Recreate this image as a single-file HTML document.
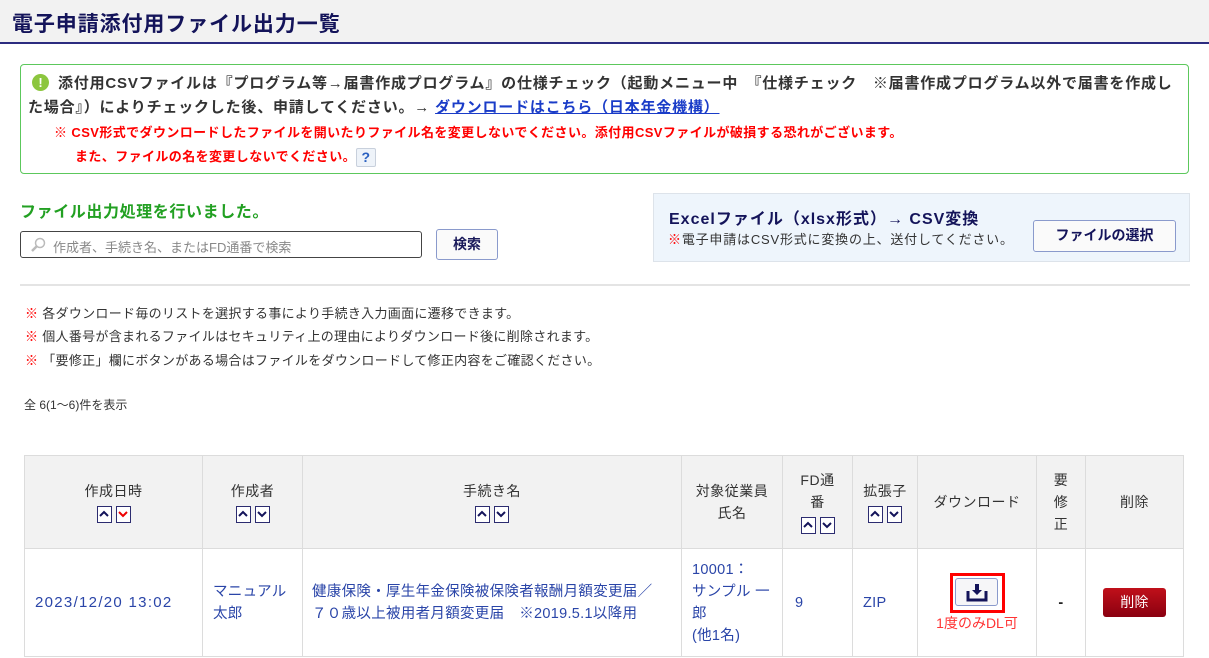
<!DOCTYPE html>
<html><head><meta charset="utf-8"><style>
*{margin:0;padding:0;box-sizing:border-box}
body{width:1209px;height:658px;overflow:hidden;background:#fff;font-family:"Liberation Sans","Noto Sans CJK JP",sans-serif;color:#333;position:relative}
.a{position:absolute;white-space:nowrap}
.hdr{left:0;top:0;width:1209px;height:44px;background:#f2f2f2;border-bottom:2px solid #2c2c80}
.title{left:12px;top:8px;font-size:21px;letter-spacing:0.9px;font-weight:bold;color:#14145a}
.gbox{left:20px;top:64px;width:1169px;height:110px;border:1px solid #5cc85c;border-radius:4px}
.l1{font-size:15px;font-weight:bold;color:#333;letter-spacing:0.8px}
.red{color:#f00;font-size:13px;font-weight:bold;letter-spacing:0.4px}
.excl{display:inline-block;width:17px;height:17px;border-radius:50%;background:#8cc63e;color:#fff;text-align:center;font-size:13px;line-height:17px;vertical-align:1px;margin-right:9px;letter-spacing:0}
a{color:#1a3cc8;text-decoration:underline}
.q{display:inline-block;width:20px;height:19px;border:1px solid #c8d0dc;background:#eef3f9;color:#2a60c0;font-size:14px;line-height:17px;text-align:center;border-radius:2px;vertical-align:middle}
.sort{display:inline-block;width:15px;height:17px;border:1.5px solid #2c2c70;background:#fff;margin:0 2px;vertical-align:middle;position:relative}
.sort svg{position:absolute;left:1px;top:2px}
.note{font-size:13px;letter-spacing:0.3px}
table{position:absolute;left:24px;top:455px;border-collapse:collapse;width:1160px;font-size:14px}
th,td{border:1px solid #dcdcdc;text-align:center;vertical-align:middle}
th{background:#f2f2f2;font-weight:normal;color:#333;height:93px;line-height:22px;letter-spacing:0.5px}
td{height:108px;color:#2a45a8;line-height:22px;letter-spacing:0.3px;font-size:14.5px}
</style></head><body>
<div class="a hdr"></div>
<div class="a title">電子申請添付用ファイル出力一覧</div>
<div class="a gbox"></div>
<div class="a l1" style="left:32px;top:72px"><span class="excl">!</span>添付用CSVファイルは『プログラム等→届書作成プログラム』の仕様チェック（起動メニュー中　『仕様チェック　※届書作成プログラム以外で届書を作成し</div>
<div class="a l1" style="left:28px;top:96px">た場合』）によりチェックした後、申請してください。→ <a>ダウンロードはこちら（日本年金機構）</a></div>
<div class="a red" style="left:54px;top:122px">※ CSV形式でダウンロードしたファイルを開いたりファイル名を変更しないでください。添付用CSVファイルが破損する恐れがございます。</div>
<div class="a red" style="left:75px;top:146px">また、ファイルの名を変更しないでください。<span class="q">?</span></div>

<div class="a" style="left:20px;top:198px;font-size:16px;font-weight:bold;color:#22a022;letter-spacing:0.6px">ファイル出力処理を行いました。</div>
<div class="a" style="left:20px;top:231px;width:402px;height:27px;border:1px solid #444;border-radius:3px;font-size:13px;color:#888;padding:5px 0 0 32px">作成者、手続き名、またはFD通番で検索
<svg style="position:absolute;left:9px;top:5px" width="16" height="16" viewBox="0 0 16 16"><circle cx="10" cy="6" r="4.5" fill="none" stroke="#bbb" stroke-width="1.5"/><line x1="7" y1="9" x2="2" y2="14" stroke="#bbb" stroke-width="2.5"/></svg></div>
<div class="a" style="left:436px;top:229px;width:62px;height:31px;border:1.5px solid #8a9acc;border-radius:3px;background:#fafafa;text-align:center;line-height:28px;font-size:14px;font-weight:bold;color:#1a1a5a">検索</div>

<div class="a" style="left:653px;top:193px;width:537px;height:69px;background:#eef5fc;border:1px solid #dde3ea"></div>
<div class="a" style="left:669px;top:205px;font-size:16px;font-weight:bold;color:#14145a;letter-spacing:1px">Excelファイル（xlsx形式）→ CSV変換</div>
<div class="a" style="left:668px;top:229px;font-size:13px;color:#333;letter-spacing:0.8px"><span style="color:#f00;font-weight:bold">※</span>電子申請はCSV形式に変換の上、送付してください。</div>
<div class="a" style="left:1033px;top:220px;width:143px;height:32px;border:1.5px solid #8a9acc;border-radius:3px;background:#fafafa;text-align:center;line-height:29px;font-size:14px;font-weight:bold;color:#14145a">ファイルの選択</div>

<div class="a" style="left:20px;top:284px;width:1170px;height:2px;background:#e4e4e4"></div>
<div class="a note" style="left:25px;top:303px"><span style="color:#f00;font-weight:bold">※</span> 各ダウンロード毎のリストを選択する事により手続き入力画面に遷移できます。</div>
<div class="a note" style="left:25px;top:326px"><span style="color:#f00;font-weight:bold">※</span> 個人番号が含まれるファイルはセキュリティ上の理由によりダウンロード後に削除されます。</div>
<div class="a note" style="left:25px;top:350px"><span style="color:#f00;font-weight:bold">※</span> 「要修正」欄にボタンがある場合はファイルをダウンロードして修正内容をご確認ください。</div>
<div class="a" style="left:24px;top:396px;font-size:12px">全 6(1～6)件を表示</div>

<table>
<tr>
<th style="width:178px">作成日時<br><span class="sort"><svg width="10" height="10"><path d="M1 7 L5 3 L9 7" fill="none" stroke="#14145a" stroke-width="2"/></svg></span><span class="sort"><svg width="10" height="10"><path d="M1 3 L5 7 L9 3" fill="none" stroke="#e00" stroke-width="2"/></svg></span></th>
<th style="width:100px">作成者<br><span class="sort"><svg width="10" height="10"><path d="M1 7 L5 3 L9 7" fill="none" stroke="#14145a" stroke-width="2"/></svg></span><span class="sort"><svg width="10" height="10"><path d="M1 3 L5 7 L9 3" fill="none" stroke="#14145a" stroke-width="2"/></svg></span></th>
<th style="width:379px">手続き名<br><span class="sort"><svg width="10" height="10"><path d="M1 7 L5 3 L9 7" fill="none" stroke="#14145a" stroke-width="2"/></svg></span><span class="sort"><svg width="10" height="10"><path d="M1 3 L5 7 L9 3" fill="none" stroke="#14145a" stroke-width="2"/></svg></span></th>
<th style="width:101px">対象従業員<br>氏名</th>
<th style="width:70px">FD通<br>番<br><span class="sort"><svg width="10" height="10"><path d="M1 7 L5 3 L9 7" fill="none" stroke="#14145a" stroke-width="2"/></svg></span><span class="sort"><svg width="10" height="10"><path d="M1 3 L5 7 L9 3" fill="none" stroke="#14145a" stroke-width="2"/></svg></span></th>
<th style="width:65px">拡張子<br><span class="sort"><svg width="10" height="10"><path d="M1 7 L5 3 L9 7" fill="none" stroke="#14145a" stroke-width="2"/></svg></span><span class="sort"><svg width="10" height="10"><path d="M1 3 L5 7 L9 3" fill="none" stroke="#14145a" stroke-width="2"/></svg></span></th>
<th style="width:119px">ダウンロード</th>
<th style="width:49px">要<br>修<br>正</th>
<th>削除</th>
</tr>
<tr>
<td style="letter-spacing:1.3px;font-size:15px;text-align:left;padding-left:10px">2023/12/20 13:02</td>
<td style="text-align:left;padding-left:10px">マニュアル<br>太郎</td>
<td style="text-align:left;padding-left:9px">健康保険・厚生年金保険被保険者報酬月額変更届／<br>７０歳以上被用者月額変更届　※2019.5.1以降用</td>
<td style="text-align:left;padding-left:10px">10001：<br>サンプル 一<br>郎<br>(他1名)</td>
<td style="text-align:left;padding-left:12px">9</td>
<td style="text-align:left;padding-left:10px">ZIP</td>
<td><div style="display:inline-block;width:55px;height:40px;border:3px solid #f00;padding:2px;vertical-align:middle"><div style="width:43px;height:28px;border:1.5px solid #8a9acc;border-radius:3px;background:#f6f6f8;position:relative"><svg style="position:absolute;left:10px;top:3px" width="22" height="20" viewBox="0 0 22 20"><path d="M2 9 V18 H20 V9" fill="none" stroke="#14145a" stroke-width="3"/><path d="M9 2 H13 V8 H16 L11 13 L6 8 H9 Z" fill="#14145a"/></svg></div></div><div style="color:#f33;font-size:14px;line-height:18px;margin-top:1px;letter-spacing:0">1度のみDL可</div></td>
<td style="color:#222;font-weight:bold">-</td>
<td><div style="display:inline-block;width:63px;height:29px;background:linear-gradient(#c0101a,#8a0010);border-radius:3px;color:#fff;line-height:29px;font-size:14px">削除</div></td>
</tr>
</table>
</body></html>
